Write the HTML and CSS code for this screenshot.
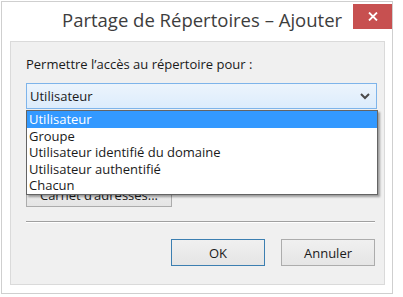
FILE: index.html
```html
<!DOCTYPE html>
<html lang="fr">
<head>
  <meta charset="UTF-8">
  <title>Partage de Répertoires – Ajouter</title>
  <link rel="stylesheet" href="styles.css">
</head>
<body>

  <div class="window">
    <div class="titlebar">
      <div class="title">Partage de Répertoires – Ajouter</div>
      <div class="close">
        <svg width="10" height="9" viewBox="0 0 10 9">
          <path d="M1 0.5 L9 8.5 M9 0.5 L1 8.5" stroke="#fff" stroke-width="1.8"/>
        </svg>
      </div>
    </div>

    <div class="panel">
      <div class="label">Permettre l’accès au répertoire pour :</div>

      <div class="combo-wrap">
        <div class="combo">
          <span>Utilisateur</span>
          <svg class="chevron" width="10" height="7" viewBox="0 0 10 7">
            <path d="M1 1 L5 5 L9 1" fill="none" stroke="#4a4a4a" stroke-width="2"/>
          </svg>
        </div>
        <ul class="list">
          <li class="selected">Utilisateur</li>
          <li>Groupe</li>
          <li>Utilisateur identifié du domaine</li>
          <li>Utilisateur authentifié</li>
          <li>Chacun</li>
        </ul>
      </div>

      <button class="btn carnet">Carnet d’adresses...</button>

      <div class="separator"></div>

      <div class="actions">
        <button class="btn btn-default">OK</button>
        <button class="btn">Annuler</button>
      </div>
    </div>
  </div>

</body>
</html>
```

FILE: styles.css
```css
body {
  margin: 0;
  padding: 0;
  background: #fff;
  font-family: 'Open Sans', 'Noto Sans', Arial, sans-serif;
  font-size: 13px;
  color: #1a1a1a;
}

.window {
  margin: 1px 0 0 1px;
  width: 390px;
  height: 291px;
  border: 1px solid #cfcfcf;
  background: #fff;
  display: flex;
  flex-direction: column;
}

.titlebar {
  height: 39px;
  display: flex;
  align-items: flex-start;
}

.title {
  flex: 1;
  padding: 5px 0 0 60px;
  font-size: 18.5px;
  color: #3d3d3d;
  white-space: nowrap;
}

.close {
  margin-top: 2px;
  width: 39px;
  height: 25px;
  background: #c75050;
  display: flex;
  align-items: center;
  justify-content: center;
}

.panel {
  margin: 0 7px 0 8px;
  height: 244px;
  background: #f0f0f0;
  border: 1px solid #dadada;
  padding: 14px 7px 0 15px;
  box-sizing: border-box;
}

.label {
  line-height: 17px;
}

.combo-wrap {
  position: relative;
  margin-top: 10px;
}

.combo {
  height: 24px;
  border: 1px solid #7eb4ea;
  background: linear-gradient(#ecf4fc, #dcecfc);
  display: flex;
  align-items: center;
  justify-content: space-between;
  padding: 0 6px 0 3px;
}

.chevron {
  margin-top: 1px;
}

.list {
  position: absolute;
  top: 27px;
  left: 0;
  width: 350px;
  margin: 0;
  padding: 0;
  list-style: none;
  background: #fff;
  border: 1px solid #646464;
  box-shadow: 2px 2px 2px rgba(0, 0, 0, 0.35);
  z-index: 2;
}

.list li {
  height: 16.5px;
  line-height: 16.5px;
  padding-left: 2px;
}

.list .selected {
  background: #3399ff;
  color: #fff;
}

.btn {
  font-family: inherit;
  font-size: 13px;
  color: #1a1a1a;
  background: linear-gradient(#f0f0f0, #e5e5e5);
  border: 1px solid #acacac;
  padding: 0;
  height: 26px;
}

.carnet {
  display: block;
  margin-top: 74px;
  width: 146px;
  height: 24px;
  line-height: 22px;
}

.separator {
  margin: 14px 2px 0 0;
  border-top: 1px solid #a0a0a0;
  border-bottom: 1px solid #fff;
}

.actions {
  display: flex;
  justify-content: flex-end;
  gap: 16px;
  margin: 16px 2px 0 0;
}

.actions .btn {
  width: 94px;
  height: 27px;
}

.btn-default {
  border-color: #3c7fb1;
}
```
